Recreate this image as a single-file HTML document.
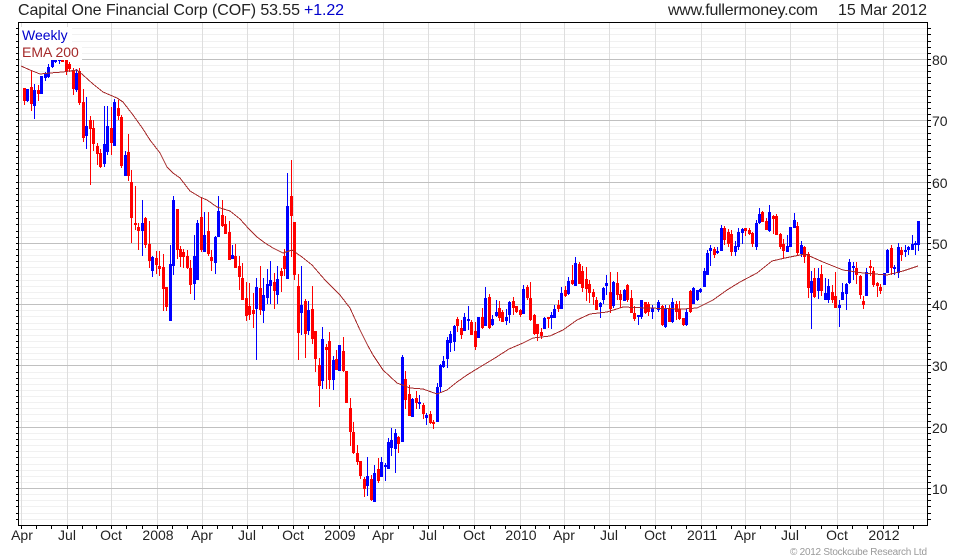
<!DOCTYPE html>
<html lang="en">
<head>
<meta charset="utf-8">
<title>Capital One Financial Corp (COF)</title>
<style>
html,body{margin:0;padding:0;background:#fff}
svg{display:block}
text{font-family:"Liberation Sans",Arial,sans-serif}
</style>
</head>
<body>
<svg xmlns="http://www.w3.org/2000/svg" width="980" height="560" viewBox="0 0 980 560">
<defs>
<path id="t" d="M0 28.5h3M0 34.5h3M0 41.5h3M0 47.5h3M0 53.5h3M0 59.5h3M0 65.5h3M0 71.5h3M0 77.5h3M0 83.5h3M0 90.5h3M0 96.5h3M0 102.5h3M0 108.5h3M0 114.5h3M0 120.5h3M0 126.5h3M0 133.5h3M0 139.5h3M0 145.5h3M0 151.5h3M0 157.5h3M0 163.5h3M0 169.5h3M0 175.5h3M0 182.5h3M0 188.5h3M0 194.5h3M0 200.5h3M0 206.5h3M0 212.5h3M0 218.5h3M0 224.5h3M0 231.5h3M0 237.5h3M0 243.5h3M0 249.5h3M0 255.5h3M0 261.5h3M0 267.5h3M0 274.5h3M0 280.5h3M0 286.5h3M0 292.5h3M0 298.5h3M0 304.5h3M0 310.5h3M0 316.5h3M0 323.5h3M0 329.5h3M0 335.5h3M0 341.5h3M0 347.5h3M0 353.5h3M0 359.5h3M0 365.5h3M0 372.5h3M0 378.5h3M0 384.5h3M0 390.5h3M0 396.5h3M0 402.5h3M0 408.5h3M0 414.5h3M0 421.5h3M0 427.5h3M0 433.5h3M0 439.5h3M0 445.5h3M0 451.5h3M0 457.5h3M0 464.5h3M0 470.5h3M0 476.5h3M0 482.5h3M0 488.5h3M0 494.5h3M0 500.5h3M0 506.5h3M0 513.5h3M0 519.5h3"/>
</defs>
<rect width="980" height="560" fill="#fff"/>
<g shape-rendering="crispEdges" fill="none">
<path stroke="#f1f1f1" stroke-width="1" d="M19 28.5H927M19 34.5H927M19 41.5H927M19 47.5H927M19 53.5H927M19 65.5H927M19 71.5H927M19 77.5H927M19 83.5H927M19 90.5H927M19 96.5H927M19 102.5H927M19 108.5H927M19 114.5H927M19 126.5H927M19 133.5H927M19 139.5H927M19 145.5H927M19 151.5H927M19 157.5H927M19 163.5H927M19 169.5H927M19 175.5H927M19 188.5H927M19 194.5H927M19 200.5H927M19 206.5H927M19 212.5H927M19 218.5H927M19 224.5H927M19 231.5H927M19 237.5H927M19 249.5H927M19 255.5H927M19 261.5H927M19 267.5H927M19 274.5H927M19 280.5H927M19 286.5H927M19 292.5H927M19 298.5H927M19 310.5H927M19 316.5H927M19 323.5H927M19 329.5H927M19 335.5H927M19 341.5H927M19 347.5H927M19 353.5H927M19 359.5H927M19 372.5H927M19 378.5H927M19 384.5H927M19 390.5H927M19 396.5H927M19 402.5H927M19 408.5H927M19 414.5H927M19 421.5H927M19 433.5H927M19 439.5H927M19 445.5H927M19 451.5H927M19 457.5H927M19 464.5H927M19 470.5H927M19 476.5H927M19 482.5H927M19 494.5H927M19 500.5H927M19 506.5H927M19 513.5H927M19 519.5H927"/>
<path stroke="#dedede" stroke-width="1" d="M21.5 22V525M67.5 22V525M111.5 22V525M157.5 22V525M202.5 22V525M247.5 22V525M293.5 22V525M339.5 22V525M383.5 22V525M428.5 22V525M474.5 22V525M520.5 22V525M564.5 22V525M609.5 22V525M655.5 22V525M701.5 22V525M745.5 22V525M790.5 22V525M837.5 22V525M883.5 22V525"/>
<path stroke="#c0c0c0" stroke-width="1" d="M19 59.5H927M19 120.5H927M19 182.5H927M19 243.5H927M19 304.5H927M19 365.5H927M19 427.5H927M19 488.5H927"/>
</g>
<g shape-rendering="crispEdges" fill="none" transform="translate(.5,0)">
<path stroke="#0000ff" stroke-width="1" d="M27 89V102M34 84V119M41 76V94M45 72V81M48 64V78M52 60V68M55 60V63M59 60V64M76 69V92M86 97V149M104 106V167M107 106V155M114 99V146M125 151V176M142 200V256M152 256V277M170 245V321M173 196V275M194 235V300M197 220V280M204 212V252M215 236V274M218 196V237M232 245V259M256 278V360M263 278V323M267 269V304M270 261V304M277 266V304M287 173V279M301 266V335M308 301V335M322 327V389M333 356V390M339 345V371M367 457V496M374 465V502M381 457V477M385 463V481M388 438V469M391 428V456M395 429V473M402 355V442M412 398V417M419 395V409M426 413V425M437 383V422M440 364V392M443 356V368M447 337V368M450 331V352M454 325V351M464 313V331M468 306V330M478 317V338M485 287V326M492 315V326M496 300V317M506 309V325M509 301V323M523 285V314M544 317V329M551 312V329M554 305V318M561 287V309M568 277V295M575 257V286M600 302V318M603 287V304M606 275V295M613 281V308M624 289V301M638 315V325M641 300V319M652 305V319M658 300V312M665 305V328M672 298V323M686 309V326M693 287V304M697 290V301M700 288V293M704 268V287M707 250V275M710 245V266M717 247V254M721 225V251M735 241V256M738 228V250M742 228V244M756 220V250M759 208V224M769 205V232M787 235V252M790 227V247M794 213V228M801 241V257M811 271V329M818 268V299M825 278V300M828 279V303M839 300V327M842 283V300M846 283V310M849 259V284M853 262V280M866 268V296M884 273V285M887 249V273M894 265V275M898 243V278M905 245V257M908 246V255M912 235V250M915 241V255M918 221V251"/>
<path stroke="#ff0000" stroke-width="1" d="M24 88V105M31 70V111M38 85V101M62 60V62M66 60V75M69 62V72M73 68V95M79 68V105M83 89V142M90 116V185M93 120V151M97 143V165M100 149V168M111 107V155M118 100V120M121 115V168M128 134V181M131 170V243M135 186V230M138 223V250M145 217V248M149 221V268M156 251V274M159 251V276M163 254V311M166 287V311M177 209V259M180 246V267M183 249V268M187 250V269M190 260V294M201 198V252M208 212V256M211 250V271M222 200V227M225 216V234M229 221V260M235 244V268M239 256V290M242 263V300M246 282V321M249 283V320M253 293V328M260 266V315M274 273V309M281 268V292M284 249V276M291 160V257M294 222V280M298 274V360M305 299V358M312 286V344M315 331V372M319 358V407M326 344V389M329 332V389M336 350V370M343 337V372M346 371V403M350 398V446M353 422V454M357 445V465M360 461V479M364 477V497M371 475V501M378 458V483M398 436V453M405 371V409M409 385V416M416 391V409M423 403V419M430 411V424M433 420V429M457 317V332M461 320V339M471 320V335M475 322V350M482 308V329M489 294V329M499 301V321M502 310V322M513 297V315M516 306V313M520 309V317M527 285V300M530 282V321M534 314V335M537 324V341M541 328V339M548 317V328M558 300V312M565 286V297M572 265V285M579 262V284M582 266V292M586 267V301M589 280V303M593 289V305M596 297V310M610 272V313M617 272V300M620 290V308M627 284V302M631 290V313M634 306V321M645 302V314M648 302V316M662 305V326M669 305V322M676 301V320M679 301V320M683 318V326M690 290V313M714 247V258M724 226V245M728 229V247M731 230V256M745 228V236M749 228V235M752 232V247M762 211V222M766 218V230M773 215V234M776 214V235M780 233V249M783 239V258M797 222V255M804 246V263M808 252V298M814 268V298M821 265V296M832 285V303M835 272V308M856 262V284M860 275V299M863 296V309M870 260V276M873 267V287M877 282V297M880 284V294M891 245V275M901 247V261"/>
<path stroke="#0000ff" stroke-width="3" d="M27 89V101M34 90V106M41 76V94M45 74V78M48 67V77M52 60V67M55 60V62M59 60V61M76 73V90M86 126V136M104 144V164M107 126V152M114 102V146M125 155V176M142 223V231M152 257V271M170 264V321M173 200V266M194 256V284M197 223V280M204 235V252M215 237V263M218 211V237M232 255V259M256 287V309M263 295V311M267 284V298M270 280V286M277 279V295M287 206V279M301 305V313M308 310V331M322 339V381M333 360V380M339 345V371M367 476V486M374 473V502M381 462V477M385 465V467M388 442V469M391 440V448M395 433V449M402 357V442M412 399V417M419 402V404M426 415V418M437 387V422M440 365V387M443 361V367M447 340V359M450 334V343M454 326V342M464 317V331M468 319V321M478 317V338M485 298V326M492 319V325M496 312V316M506 317V321M509 302V315M523 289V314M544 318V329M551 315V318M554 309V318M561 293V309M568 281V294M575 263V286M600 303V307M603 288V300M606 283V286M613 282V306M624 290V301M638 315V317M641 300V317M652 308V312M658 302V310M665 308V327M672 302V322M686 312V325M693 288V304M697 290V300M700 289V292M704 271V287M707 253V275M710 248V251M717 251V253M721 228V251M735 246V252M738 232V247M742 229V233M756 223V247M759 214V223M769 212V231M787 246V252M790 227V247M794 220V228M801 245V254M811 281V293M818 278V291M825 293V300M828 286V300M839 305V308M842 292V300M846 284V294M849 262V283M853 266V268M866 272V296M884 273V285M887 250V273M894 267V269M898 247V273M905 250V252M908 247V250M912 244V250M915 243V245M918 221V245"/>
<path stroke="#ff0000" stroke-width="3" d="M24 88V101M31 87V104M38 90V94M62 60V62M66 60V71M69 64V69M73 70V89M79 71V103M83 102V138M90 120V129M93 128V144M97 146V154M100 153V167M111 128V143M118 108V116M121 117V166M128 152V176M131 182V218M135 223V225M138 227V231M145 218V245M149 244V261M156 258V265M159 266V269M163 267V289M166 287V307M177 209V250M180 249V257M183 252V257M187 256V268M190 268V285M201 217V250M208 231V254M211 257V261M222 215V226M225 224V234M229 232V260M235 256V268M239 266V277M242 278V300M246 298V316M249 306V315M253 310V314M260 288V310M274 282V291M281 271V276M284 256V269M291 196V216M294 222V275M298 286V333M305 301V334M312 309V339M315 331V359M319 365V386M326 347V350M329 341V380M336 359V370M343 351V371M346 371V403M350 408V432M353 432V453M357 453V462M360 461V476M364 479V489M371 479V500M378 469V481M398 437V444M405 379V400M409 394V416M416 398V403M423 405V414M430 414V423M433 422V424M457 319V326M461 328V335M471 322V335M475 331V347M482 317V328M489 297V328M499 308V318M502 312V322M513 301V308M516 306V312M520 310V315M527 287V298M530 298V320M534 315V334M537 324V334M541 332V336M548 317V319M558 305V309M565 290V296M572 280V284M579 264V284M582 271V288M586 279V289M589 284V293M593 292V297M596 300V310M610 292V309M617 283V295M620 294V300M627 285V300M631 298V313M634 313V319M645 302V313M648 304V312M662 306V325M669 308V322M676 304V312M679 309V319M683 318V325M690 291V312M714 249V255M724 228V240M728 232V244M731 234V252M745 228V231M749 230V234M752 233V244M762 212V222M766 221V230M773 216V219M776 216V235M780 234V247M783 244V251M797 226V253M804 247V257M808 254V288M814 278V297M821 274V291M832 292V300M835 296V308M856 268V275M860 276V295M863 301V305M870 266V268M873 271V285M877 283V286M880 287V291M891 248V268M901 250V255"/>
</g>
<polyline shape-rendering="crispEdges" fill="none" stroke="#a52a2a" stroke-width="1" points="21,66 30,70 40,74 50,73 63,72 77,70 83,75 93,84 103,92 117,98 123,102 133,115 143,129 150,140 160,153 167,167 173,173 180,178 190,191 200,197 207,200 217,207 230,211 240,219 249,229 257,237 265,243 273,248 283,253 292,250 302,257 312,265 325,280 340,295 350,308 355,319 360,330 367,344 373,355 383,370 397,383 410,388 423,389 437,394 447,390 457,382 467,375 480,367 495,358 509,349 523,343 533,338 550,336 563,330 577,320 590,314 607,312 623,307 647,308 683,309 697,308 713,300 727,290 740,282 757,273 772,261 785,258 805,254 823,262 843,270 863,273 887,275 903,271 918,266"/>
<rect x="20" y="27" width="52" height="16" fill="#fff"/>
<rect x="20" y="43" width="62" height="17" fill="#fff"/>
<g shape-rendering="crispEdges" fill="none" stroke="#000" stroke-width="1">
<path d="M18.5 22.5H927.5V525.5H18.5Z"/>
<use href="#t" x="16"/>
<use href="#t" x="928"/>
<path d="M21.5 526v3M36.5 526v3M51.5 526v3M67.5 526v3M82.5 526v3M96.5 526v3M111.5 526v3M126.5 526v3M142.5 526v3M157.5 526v3M172.5 526v3M187.5 526v3M202.5 526v3M217.5 526v3M232.5 526v3M247.5 526v3M262.5 526v3M278.5 526v3M293.5 526v3M308.5 526v3M324.5 526v3M339.5 526v3M354.5 526v3M368.5 526v3M383.5 526v3M398.5 526v3M413.5 526v3M428.5 526v3M443.5 526v3M459.5 526v3M474.5 526v3M490.5 526v3M505.5 526v3M520.5 526v3M535.5 526v3M549.5 526v3M564.5 526v3M579.5 526v3M594.5 526v3M609.5 526v3M625.5 526v3M640.5 526v3M655.5 526v3M671.5 526v3M686.5 526v3M701.5 526v3M716.5 526v3M731.5 526v3M745.5 526v3M760.5 526v3M775.5 526v3M790.5 526v3M805.5 526v3M821.5 526v3M837.5 526v3M852.5 526v3M867.5 526v3M883.5 526v3M898.5 526v3M913.5 526v3"/>
</g>
<g font-size="16" fill="#222">
<text x="18" y="15" textLength="282" lengthAdjust="spacing">Capital One Financial Corp (COF) 53.55</text>
<text x="304" y="15" textLength="40" lengthAdjust="spacing" fill="#0000cc">+1.22</text>
<text x="668" y="15" textLength="150" lengthAdjust="spacing">www.fullermoney.com</text>
<text x="838" y="15" textLength="89" lengthAdjust="spacing">15 Mar 2012</text>
</g>
<text x="22" y="40" font-size="14" fill="#0000cc">Weekly</text>
<text x="22" y="57" font-size="14" fill="#a52a2a">EMA 200</text>
<g font-size="14" fill="#222">
<text x="932" y="65">80</text>
<text x="932" y="126">70</text>
<text x="932" y="188">60</text>
<text x="932" y="249">50</text>
<text x="932" y="310">40</text>
<text x="932" y="371">30</text>
<text x="932" y="433">20</text>
<text x="932" y="494">10</text>
</g>
<g font-size="14" fill="#222" text-anchor="middle">
<text x="22" y="540">Apr</text>
<text x="67" y="540">Jul</text>
<text x="111" y="540">Oct</text>
<text x="158" y="540">2008</text>
<text x="202" y="540">Apr</text>
<text x="247" y="540">Jul</text>
<text x="293" y="540">Oct</text>
<text x="340" y="540">2009</text>
<text x="383" y="540">Apr</text>
<text x="428" y="540">Jul</text>
<text x="474" y="540">Oct</text>
<text x="521" y="540">2010</text>
<text x="564" y="540">Apr</text>
<text x="609" y="540">Jul</text>
<text x="655" y="540">Oct</text>
<text x="702" y="540">2011</text>
<text x="745" y="540">Apr</text>
<text x="790" y="540">Jul</text>
<text x="837" y="540">Oct</text>
<text x="884" y="540">2012</text>
</g>
<text x="790" y="555" font-size="10" fill="#999" textLength="137" lengthAdjust="spacing">© 2012 Stockcube Research Ltd</text>
</svg>
</body>
</html>
